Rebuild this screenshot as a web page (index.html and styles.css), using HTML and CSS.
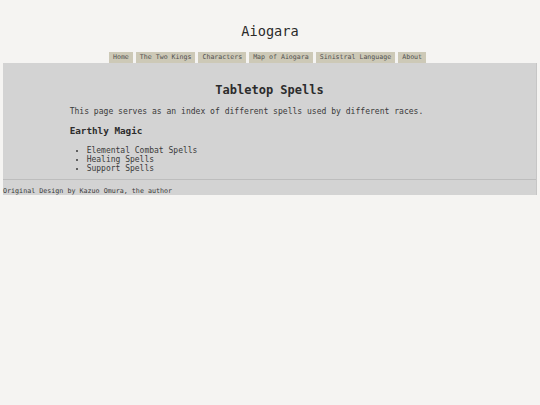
FILE: index.html
```html
<!DOCTYPE html>
<html>
<head>
<meta charset="utf-8">
<title>Aiogara</title>
<link rel="stylesheet" href="styles.css">
</head>
<body>
<header class="site-header">
  <h1 class="site-title">Aiogara</h1>
  <nav class="nav">
    <a class="tab" href="#">Home</a>
    <a class="tab" href="#">The Two Kings</a>
    <a class="tab" href="#">Characters</a>
    <a class="tab" href="#">Map of Aiogara</a>
    <a class="tab" href="#">Sinistral Language</a>
    <a class="tab" href="#">About</a>
  </nav>
</header>
<main class="panel">
  <div class="content">
    <h2 class="page-title">Tabletop Spells</h2>
    <p class="intro">This page serves as an index of different spells used by different races.</p>
    <h3 class="section-title">Earthly Magic</h3>
    <ul class="spell-list">
      <li>Elemental Combat Spells</li>
      <li>Healing Spells</li>
      <li>Support Spells</li>
    </ul>
  </div>
  <footer class="footer">Original Design by Kazuo Omura, the author</footer>
</main>
</body>
</html>
```
FILE: styles.css
```css
html, body {
  margin: 0;
  padding: 0;
  background: #f5f4f2;
  font-family: "DejaVu Sans Mono", monospace;
  color: #333;
}

.site-header {
  padding-top: 22px;
  text-align: center;
}

.site-title {
  margin: 0;
  font-size: 13.6px;
  line-height: 18px;
  font-weight: normal;
  color: #2a2a2a;
}

.nav {
  margin-top: 12px;
  display: flex;
  justify-content: center;
  gap: 3px;
  padding-right: 5px;
}

.tab,
.tab:visited {
  display: block;
  background: #cdc9b7;
  color: #505050;
  text-decoration: none;
  font-size: 6.6px;
  line-height: 11px;
  height: 11px;
  padding: 0 4px;
}

.panel {
  margin: 0 3px;
  background: #d3d3d3;
  border-right: 1px solid #c6c6c6;
  padding-top: 20px;
}

.content {
  width: 75%;
  margin: 0 auto;
}

.page-title {
  margin: 0;
  text-align: center;
  font-size: 12px;
  line-height: 14px;
  font-weight: bold;
  color: #2c2c2c;
}

.intro {
  margin: 10px 0 0;
  font-size: 8.06px;
  line-height: 10px;
  color: #3a3a3a;
}

.section-title {
  margin: 8px 0 0;
  font-size: 9.3px;
  line-height: 12px;
  font-weight: bold;
  color: #2c2c2c;
}

.spell-list {
  margin: 8.5px 0 0;
  padding-left: 17px;
  font-size: 8px;
  line-height: 9px;
  color: #3a3a3a;
}

.footer {
  border-top: 1px solid #bdbdbd;
  margin-top: 6px;
  padding-top: 7px;
  height: 16px;
  box-sizing: border-box;
  font-size: 6.7px;
  line-height: 8px;
  color: #3a3a3a;
}
```
